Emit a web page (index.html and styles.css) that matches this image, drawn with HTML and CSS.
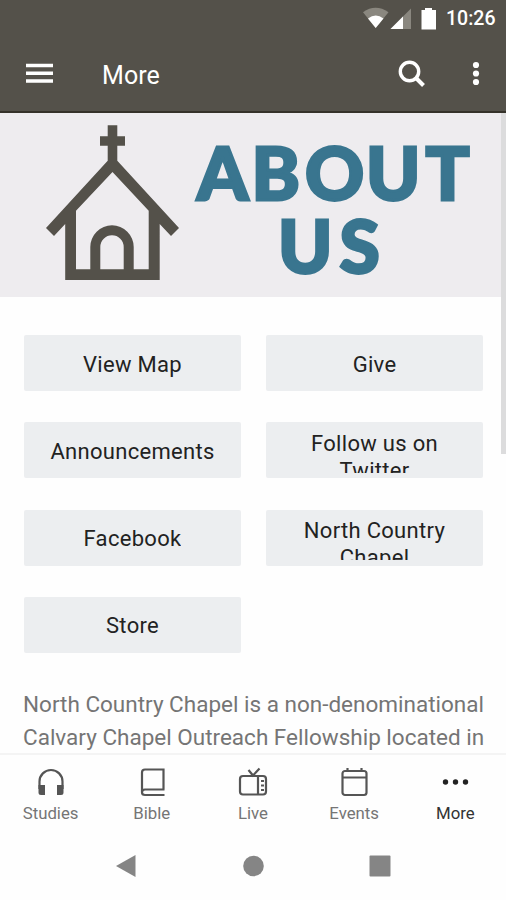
FILE: index.html
```html
<!DOCTYPE html>
<html lang="en">
<head>
<meta charset="utf-8">
<title>More</title>
<link rel="stylesheet" href="styles.css">
</head>
<body>
<div class="screen">
  <header class="top">
    <div class="status">
      <svg class="status-icons" width="76" height="24" viewBox="0 0 76 24">
        <path d="M0 5.2Q12.500 -3.600 25.500 5.200L12.700 21Z" fill="#8a877f"/>
        <path d="M5 11.500Q12.700 5.500 20.500 11.500L12.700 21Z" fill="#fff"/>
        <path d="M27.500 22L48 1.500V22Z" fill="#8a877f"/>
        <path d="M27.500 22L40 9.500V22Z" fill="#fff"/>
        <path d="M62 1h7v2h4v19.500H58.500V3H62Z" fill="#fff"/>
      </svg>
      <span class="clock">10:26</span>
    </div>
    <div class="appbar">
      <svg class="menu" width="27" height="21" viewBox="0 0 27 21"><path d="M0 2.500h27M0 10.200h27M0 18h27" stroke="#fff" stroke-width="3.400"/></svg>
      <h1 class="title">More</h1>
      <svg class="search" width="28" height="28" viewBox="0 0 28 28" fill="none" stroke="#fff"><circle cx="11.500" cy="11.500" r="9.200" stroke-width="3.400"/><path d="M18 18l7.500 7.500" stroke-width="4"/></svg>
      <svg class="kebab" width="8" height="26" viewBox="0 0 8 26" fill="#fff"><circle cx="4" cy="4" r="3.100"/><circle cx="4" cy="12.500" r="3.100"/><circle cx="4" cy="21" r="3.100"/></svg>
    </div>
  </header>
  <main class="content">
    <svg class="banner" width="506" height="184" viewBox="0 113 506 184">
      <path fill="#54514a" fill-rule="evenodd" d="M107.700 125.300H117.300V136.300H125V145.700H117.300V160.700L179 228L171 236L159.700 224V280H65.200V224L54 236L46 228L107.700 160.700V145.700H100V136.300H107.700ZM112.500 172L76 210.700V269.300H90.300V247A21.700 21.700 0 0 1 133.700 247V269.300H148.700V210.700ZM100.300 269.300H123.700V247A11.700 11.700 0 0 0 100.300 247Z"/>
      <text class="hero" x="197 251.500 305 366 425.500" y="199.900">ABOUT</text>
      <text class="hero" x="278 339.500" y="272.700">US</text>
    </svg>
    <div class="grid">
      <a class="btn"><span>View Map</span></a>
      <a class="btn"><span>Give</span></a>
      <a class="btn"><span>Announcements</span></a>
      <a class="btn"><span>Follow us on Twitter</span></a>
      <a class="btn"><span>Facebook</span></a>
      <a class="btn"><span>North Country Chapel</span></a>
      <a class="btn"><span>Store</span></a>
    </div>
    <p class="about"><span class="line">North Country Chapel is a non-denominational</span><span class="line">Calvary Chapel Outreach Fellowship located in</span></p>
    <div class="scroll"></div>
  </main>
  <nav class="tabs">
    <a class="tab"><svg width="30" height="30" viewBox="0 0 30 30"><path d="M3.500 22V14.500a11.500 11.500 0 0 1 23 0V22" fill="none" stroke="#555" stroke-width="2.200"/><path d="M2.500 18h6.500v10H5q-2.500 0-2.500-2.500ZM27.500 18H21v10h4q2.500 0 2.500-2.500Z" fill="#555"/></svg><span>Studies</span></a>
    <a class="tab"><svg width="30" height="30" viewBox="0 0 30 30" fill="none" stroke="#555" stroke-width="2.200"><path d="M26.500 22.500V2.500H8Q5 2.500 5 5.500V25.500Q5 28 8 28H27.500M5 25.500Q5 22.500 8 22.500H27.500"/></svg><span>Bible</span></a>
    <a class="tab"><svg width="30" height="30" viewBox="0 0 30 30" fill="none" stroke="#555" stroke-width="2.200"><rect x="2" y="9" width="26" height="18.500" rx="3"/><path d="M20 9v18.500M10.500 3l4.500 5.500L21.500 1.500"/><path d="M23 14h3M23 18.500h3M23 23h3"/></svg><span>Live</span></a>
    <a class="tab"><svg width="30" height="30" viewBox="0 0 30 30" fill="none" stroke="#555" stroke-width="2.200"><rect x="3.500" y="4" width="24" height="24" rx="2.500"/><path d="M3.500 10.500h24M8.500 1v3M22.500 1v3"/></svg><span>Events</span></a>
    <a class="tab active"><svg width="30" height="30" viewBox="0 0 30 30" fill="#222"><circle cx="5.500" cy="15" r="2.700"/><circle cx="15.500" cy="15" r="2.700"/><circle cx="25.500" cy="15" r="2.700"/></svg><span>More</span></a>
  </nav>
  <div class="sysnav">
    <svg width="24" height="24" viewBox="0 0 24 24"><path d="M2 12L21.500 1v22Z" fill="#858585"/></svg>
    <svg width="24" height="24" viewBox="0 0 24 24"><circle cx="12.500" cy="12" r="10.300" fill="#858585"/></svg>
    <svg width="24" height="24" viewBox="0 0 24 24"><rect x="1.500" y="1.500" width="21" height="21" rx="1" fill="#858585"/></svg>
  </div>
</div>
</body>
</html>
```
FILE: styles.css
```css
* { box-sizing: border-box; }
body { margin: 0; font-family: Roboto, "Liberation Sans", sans-serif; background: #fefefe; }
.screen { width: 506px; height: 900px; display: flex; flex-direction: column; overflow: hidden; }
.top { height: 113px; background: #54514a; border-bottom: 2px solid #35322a; color: #fff; flex: none; }
.status { height: 37px; display: flex; align-items: center; justify-content: flex-end; padding-right: 11px; }
.status-icons { margin-right: 7px; }
.clock { font-size: 19.500px; font-weight: 500; width: 49px; white-space: nowrap; }
.appbar { height: 74px; display: flex; align-items: center; padding: 0 26px; }
.menu { margin-top: -2px; }
.title { margin: 2px 0 0 49px; font-size: 25px; font-weight: 400; flex: 1; letter-spacing: .1px; }
.search { margin-right: 46px; }
.content { position: relative; flex: 1; min-height: 0; overflow: hidden; }
.banner { display: block; background: #eeecef; }
.hero { font-family: Lato, sans-serif; font-weight: 900; font-size: 73px; fill: #39758f; stroke: #39758f; stroke-width: 2.800px; }
.grid { display: grid; grid-template-columns: 217px 217px; grid-auto-rows: 56px; gap: 31.300px 25px; padding: 38px 24px 0; }
.btn { background: #eceef0; border-radius: 2px; padding: 6px 24px; display: flex; justify-content: center; }
.btn span { display: block; max-height: 45px; padding-top: 2px; overflow: hidden; text-align: center; font-size: 22px; line-height: 27px; letter-spacing: .3px; color: #222; align-self: center; }
.about { margin: 35px 0 0 23px; font-size: 22.500px; line-height: 33px; color: #757575; }
.line { display: block; white-space: nowrap; }
.scroll { position: absolute; right: 0; top: 0; width: 5px; height: 341px; background: #dcdcdd; }
.tabs { height: 79px; flex: none; display: grid; grid-template-columns: repeat(5, 1fr); border-top: 2px solid #f4f4f4; background: #fefefe; }
.tab { display: flex; flex-direction: column; align-items: center; padding-top: 12px; font-size: 16.800px; line-height: 22px; color: #757575; }
.tab span { margin-top: 5px; }
.active { color: #333; }
.sysnav { height: 68px; flex: none; display: flex; justify-content: space-between; padding: 22px 114px 0; }
```
